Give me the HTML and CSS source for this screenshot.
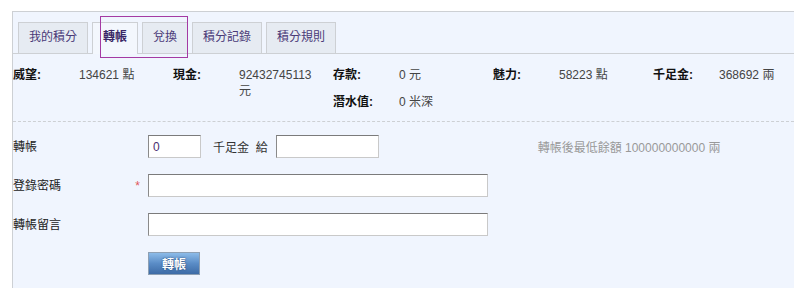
FILE: index.html
```html
<!DOCTYPE html>
<html lang="zh-Hant">
<head>
  <meta charset="UTF-8">
  <meta name="viewport" content="width=device-width, initial-scale=1.0">
  <title>轉帳</title>
  <link rel="stylesheet" href="styles.css">
</head>
<body>
  <div class="panel">
    <!-- 分頁 -->
    <ul class="tabs">
      <li class="tab">我的積分</li>
      <li class="tab active">轉帳</li>
      <li class="tab">兌換</li>
      <li class="tab">積分記錄</li>
      <li class="tab">積分規則</li>
    </ul>

    <!-- 積分一覽 -->
    <div class="stats">
      <span class="stat-label">威望:</span>
      <span class="stat-val">134621 點</span>
      <span class="stat-label">現金:</span>
      <span class="stat-val cash">92432745113 元</span>
      <span class="stat-label">存款:</span>
      <span class="stat-val">0 元</span>
      <span class="stat-label">魅力:</span>
      <span class="stat-val">58223 點</span>
      <span class="stat-label">千足金:</span>
      <span class="stat-val">368692 兩</span>
      <span class="stat-label dive">潛水值:</span>
      <span class="stat-val dive-val">0 米深</span>
    </div>

    <!-- 轉帳表單 -->
    <form class="transfer">
      <div class="row">
        <label class="row-label">轉帳</label>
        <input type="text" class="field small" value="0">
        <span class="unit">千足金 &nbsp;給</span>
        <input type="text" class="field medium">
        <span class="hint">轉帳後最低餘額 100000000000 兩</span>
      </div>
      <div class="row">
        <label class="row-label">登錄密碼 <em class="req">*</em></label>
        <input type="password" class="field wide">
      </div>
      <div class="row">
        <label class="row-label">轉帳留言</label>
        <input type="text" class="field wide">
      </div>
      <div class="row">
        <span class="row-label"></span>
        <button type="submit" class="btn">轉帳</button>
      </div>
    </form>
  </div>

  <div class="highlight"></div>
</body>
</html>
```

FILE: styles.css
```css
/* 基本 */
body {
  margin: 0;
  background: #fff;
  font-family: "Liberation Sans", "Noto Sans CJK TC", sans-serif;
  font-size: 12px;
  color: #333;
}
.panel {
  margin: 11px 0 0 12px;
  border-top: 1px solid #cdd0d4;
  border-left: 1px solid #cdd0d4;
  background: #f0f5fe;
  height: 276px;
}

/* 分頁 */
.tabs {
  list-style: none;
  margin: 10px 0 0;
  padding: 0 0 0 5px;
  display: flex;
  gap: 4px;
  border-bottom: 1px solid #cdd0d4;
}
.tab {
  height: 30px;
  line-height: 29px;
  padding: 0 10px;
  border: 1px solid #cdd0d4;
  border-bottom: none;
  background: #e6ebf2;
  color: #4a3a78;
}
.tab.active {
  background: #f3f7fd;
  font-weight: bold;
  color: #3a2766;
  margin-bottom: -1px;
  height: 31px;
}

/* 積分一覽 */
.stats {
  display: grid;
  grid-template-columns: repeat(5, 66px 94px);
  grid-template-rows: 27px 16px;
  line-height: 16px;
  padding: 13px 0 11px;
  border-bottom: 1px dashed #cdd0d4;
}
.stat-label {
  font-weight: bold;
  color: #111;
}
.stat-val {
  color: #444;
  padding-right: 12px;
}
.stat-val.cash {
  grid-row: span 2;
}
.stat-label.dive {
  grid-column: 5;
  grid-row: 2;
}
.stat-val.dive-val {
  grid-column: 6;
  grid-row: 2;
}

/* 表單 */
.transfer {
  padding-top: 13px;
  display: flex;
  flex-direction: column;
  gap: 16px;
}
.row {
  display: flex;
  align-items: center;
  height: 23px;
}
.row-label {
  width: 135px;
  color: #222;
  display: flex;
  justify-content: space-between;
  align-items: center;
  padding-bottom: 3px;
}
.req {
  font-style: normal;
  color: #e0565b;
  padding: 4px 8px 0 0;
  font-size: 12px;
}
.field {
  box-sizing: border-box;
  height: 23px;
  border: 1px solid;
  border-color: #7b7b7b #c9c9c9 #c9c9c9 #8a8a8a;
  background: #fff;
  padding: 0 4px;
  font: inherit;
  color: #4a3070;
}
.field.small { width: 53px; }
.field.medium { width: 103px; }
.field.wide { width: 340px; }
.unit {
  margin: 0 8px 0 12px;
  color: #333;
}
.hint {
  margin-left: 159px;
  color: #999;
}
.btn {
  width: 52px;
  height: 23px;
  border: 1px solid #8d9fb3;
  background: linear-gradient(#8cbbe9, #5a8cc6 50%, #3d6ba6);
  color: #fff;
  font: inherit;
  font-weight: bold;
  text-shadow: 0 0 2px #1d3d6a;
  cursor: pointer;
  padding: 0;
}

/* 標示框 */
.highlight {
  position: absolute;
  left: 100px;
  top: 16px;
  width: 86px;
  height: 40px;
  border: 1px solid #a43aa3;
}
```
